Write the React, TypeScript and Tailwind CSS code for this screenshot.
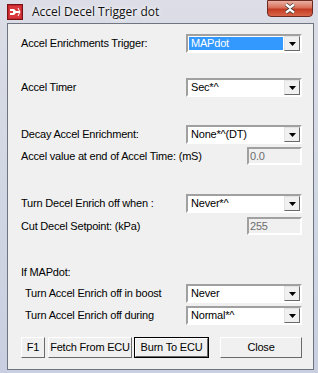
import React from "react";

const ui = "font-['Liberation_Sans',Arial,sans-serif] text-[11px] tracking-[-0.2px] text-black";

function Combo({ value, selected }: { value: string; selected?: boolean }) {
  return (
    <div className="w-[116px] h-[19px] border-2 border-t-[#a0a0a0] border-l-[#a0a0a0] border-b-white border-r-white bg-white flex">
      <div
        className={`flex-1 ml-[1px] my-[1px] mr-[1px] flex items-center pl-[2px] leading-none ${
          selected ? "bg-[#3399ff] text-white" : "text-black"
        }`}
      >
        {value}
      </div>
      <div className="w-[16px] h-full border border-t-[#e3e3e3] border-l-[#e3e3e3] border-b-[#696969] border-r-[#696969] bg-[#f0f0f0] flex items-center justify-center">
        <svg width="7" height="4" viewBox="0 0 7 4">
          <path d="M0 0h7L3.5 4z" fill="#000" />
        </svg>
      </div>
    </div>
  );
}

function Field({ value }: { value: string }) {
  return (
    <div className="w-[55px] h-[18px] border-2 border-t-[#a0a0a0] border-l-[#a0a0a0] border-b-white border-r-white bg-[#f0f0f0] flex items-center pl-[1px] text-[#6d6d6d] leading-none">
      {value}
    </div>
  );
}

function Button({ label, width, isDefault }: { label: string; width: string; isDefault?: boolean }) {
  return (
    <div className={`${width} h-[21px] ${isDefault ? "border border-black" : ""} flex`}>
      <div className="flex-1 border border-t-white border-l-white border-b-[#696969] border-r-[#696969] bg-[#f0f0f0] flex items-center justify-center leading-none whitespace-nowrap">
        {label}
      </div>
    </div>
  );
}

function Row({ label, children, className, indent }: { label: string; children?: React.ReactNode; className: string; indent?: boolean }) {
  return (
    <div className={`flex items-center ${className}`}>
      <div className={`flex-1 whitespace-nowrap ${indent ? "pl-[4px]" : ""}`}>{label}</div>
      {children}
    </div>
  );
}

export default function App() {
  return (
    <div className="w-[318px] h-[373px] overflow-hidden bg-[linear-gradient(180deg,#dcdde6_0%,#d3d8e4_40%,#c9cfe0_100%)] relative">
      {/* title bar */}
      <div className="h-[23px] flex items-center">
        <svg className="ml-[7px]" width="16" height="16" viewBox="0 0 16 16">
          <rect x="0.5" y="0.5" width="15" height="15" fill="#c4262e" stroke="#7a1216" />
          <rect x="2" y="2" width="12" height="12" fill="#d8383c" />
          <path d="M3 5h4l2 2h4v2H9l-2 2H3V9h3V7H3z" fill="#fff" />
          <path d="M11 4l2 4-2 4" stroke="#fff" strokeWidth="1" fill="none" />
        </svg>
        <span className="ml-[9px] font-['Open_Sans',sans-serif] text-[12px] text-[#111] [text-shadow:0_0_6px_#fff,0_0_3px_#fff]">
          Accel Decel Trigger dot
        </span>
        <div className="ml-auto mr-[5px] self-start w-[46px] h-[17px] rounded-b-[4px] border border-[#6b2a22] bg-[linear-gradient(180deg,#eab0a2_0%,#d8705a_45%,#c23a22_55%,#d9664a_100%)] flex items-center justify-center">
          <svg width="14" height="11" viewBox="0 0 14 11">
            <path d="M3 1.5l4 3 4-3M3 9.5l4-3 4 3" stroke="#3a3a3a" strokeWidth="3.6" fill="none" />
            <path d="M3 1.5l4 3 4-3M3 9.5l4-3 4 3" stroke="#fff" strokeWidth="2.2" fill="none" />
          </svg>
        </div>
      </div>

      {/* client area */}
      <div className={`ml-[7px] w-[307px] h-[347px] border border-[#6e7480] bg-[#f0f0f0] flex flex-col pl-[13px] pr-[11px] ${ui}`}>
        <Row label="Accel Enrichments Trigger:" className="mt-[10px] h-[19px]">
          <Combo value="MAPdot" selected />
        </Row>
        <Row label="Accel Timer" className="mt-[25px] h-[19px]">
          <Combo value="Sec*^" />
        </Row>
        <Row label="Decay Accel Enrichment:" className="mt-[28px] h-[19px]">
          <Combo value="None*^(DT)" />
        </Row>
        <Row label="Accel value at end of Accel Time: (mS)" className="mt-[3px] h-[18px]">
          <Field value="0.0" />
        </Row>
        <Row label="Turn Decel Enrich off when :" className="mt-[29px] h-[19px]">
          <Combo value="Never*^" />
        </Row>
        <Row label="Cut Decel Setpoint: (kPa)" className="mt-[4px] h-[18px]">
          <Field value="255" />
        </Row>
        <Row label="If MAPdot:" className="mt-[28px] h-[19px]" />
        <Row label="Turn Accel Enrich off in boost" className="mt-[2px] h-[19px]" indent>
          <Combo value="Never" />
        </Row>
        <Row label="Turn Accel Enrich off during" className="mt-[3px] h-[19px]" indent>
          <Combo value="Normal*^" />
        </Row>
        <div className="mt-[12px] flex items-center">
          <Button label="F1" width="w-[27px]" />
          <div className="ml-[3px]">
            <Button label="Fetch From ECU" width="w-[84px]" />
          </div>
          <div className="ml-[2px]">
            <Button label="Burn To ECU" width="w-[75px]" isDefault />
          </div>
          <div className="ml-[11px]">
            <Button label="Close" width="w-[82px]" />
          </div>
        </div>
      </div>
    </div>
  );
}
